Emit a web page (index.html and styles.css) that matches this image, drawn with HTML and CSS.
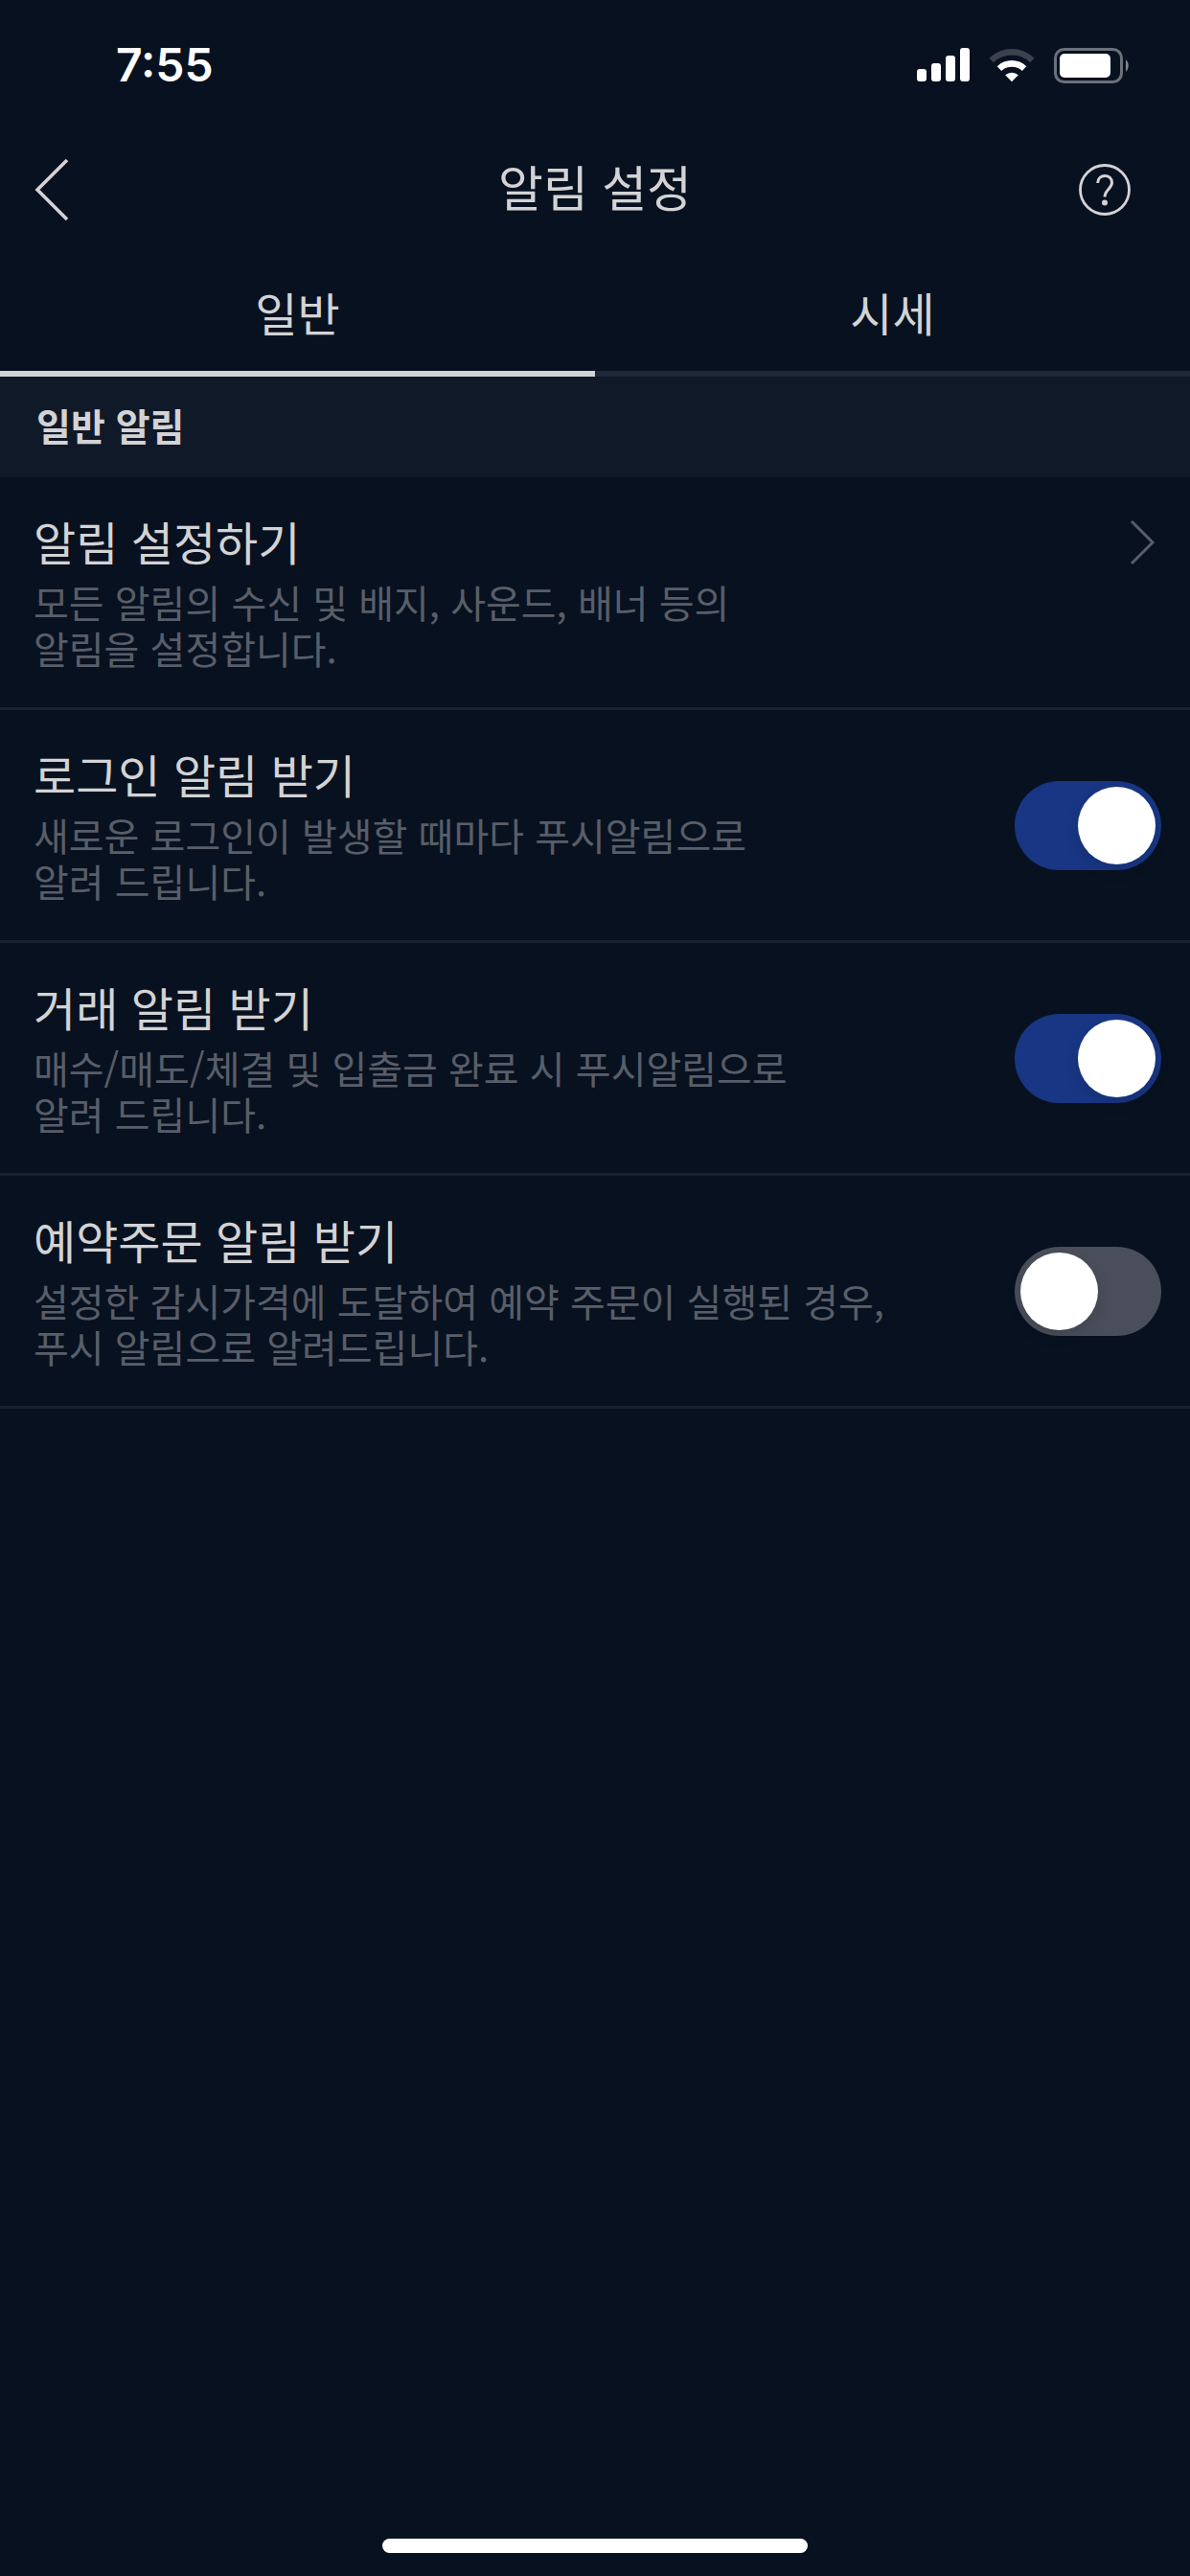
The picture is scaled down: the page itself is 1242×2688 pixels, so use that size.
FILE: index.html
```html
<!DOCTYPE html>
<html lang="ko">
<head>
    <meta charset="UTF-8">
    <meta name="viewport" content="width=device-width, initial-scale=1.0">
    <title>알림 설정</title>
    <link rel="stylesheet" href="styles.css">
</head>
<body>
    <div class="status-bar">
        <span class="time">7:55</span>
        <div class="status-icons">
            <svg width="55" height="36" viewBox="0 0 55 36" fill="#fff">
                <rect x="0" y="22" width="10" height="13" rx="3"/>
                <rect x="15" y="16" width="10" height="19" rx="3"/>
                <rect x="30" y="8" width="10" height="27" rx="3"/>
                <rect x="45" y="0" width="10" height="35" rx="3"/>
            </svg>
            <svg width="48" height="36" viewBox="0 0 48 36" fill="#fff">
                <path d="M0.5 10.5 A34 34 0 0 1 47.5 10.5 L43.3 15.2 A28 28 0 0 0 4.7 15.2 Z" fill="#3c424d"/>
                <path d="M8.7 19.2 A22 22 0 0 1 39.3 19.2 L34.8 24 A16 16 0 0 0 13.2 24 Z"/>
                <path d="M17.2 28.2 A10.5 10.5 0 0 1 30.8 28.2 L24 35.3 Z"/>
            </svg>
            <svg width="79" height="37" viewBox="0 0 79 37">
                <rect x="1.5" y="1.5" width="69" height="34" rx="9" fill="none" stroke="#6b717a" stroke-width="3"/>
                <rect x="6" y="6" width="53" height="25" rx="5" fill="#fff"/>
                <path d="M75 12 A9 9 0 0 1 75 25 Z" fill="#848990"/>
            </svg>
        </div>
    </div>

    <header class="header">
        <button class="icon-button" type="button" aria-label="뒤로">
            <svg width="36" height="66" viewBox="0 0 36 66">
                <path d="M34 2 L3 33 L34 64" fill="none" stroke="#d3d3d5" stroke-width="3.6"/>
            </svg>
        </button>
        <h1>알림 설정</h1>
        <button class="icon-button help" type="button" aria-label="도움말">
            <svg width="54" height="54" viewBox="0 0 54 54" fill="none" stroke="#d3d3d5" stroke-width="2.8">
                <circle cx="27" cy="27" r="25.5"/>
                <path d="M19.7 20 C19.7 10 34.5 10 34.5 19.5 C34.5 26 27 27 27 34.5" stroke-width="3"/>
                <circle cx="27" cy="40.5" r="3" fill="#d3d3d5" stroke="none"/>
            </svg>
        </button>
    </header>

    <nav class="tabs" role="tablist">
        <button class="tab active" type="button" role="tab" aria-selected="true">일반</button>
        <button class="tab" type="button" role="tab" aria-selected="false">시세</button>
    </nav>

    <main>
        <h2 class="section-title">일반 알림</h2>

        <a class="row" href="#">
            <div class="row-text">
                <span class="row-title">알림 설정하기</span>
                <p>모든 알림의 수신 및 배지, 사운드, 배너 등의<br>알림을 설정합니다.</p>
            </div>
            <svg class="chevron" width="27" height="48" viewBox="0 0 27 48">
                <path d="M2 2 L24 24 L2 46" fill="none" stroke="#585e69" stroke-width="3"/>
            </svg>
        </a>

        <div class="row">
            <div class="row-text">
                <label class="row-title" for="login">로그인 알림 받기</label>
                <p>새로운 로그인이 발생할 때마다 푸시알림으로<br>알려 드립니다.</p>
            </div>
            <input class="switch" type="checkbox" id="login" checked>
        </div>

        <div class="row">
            <div class="row-text">
                <label class="row-title" for="trade">거래 알림 받기</label>
                <p>매수/매도/체결 및 입출금 완료 시 푸시알림으로<br>알려 드립니다.</p>
            </div>
            <input class="switch" type="checkbox" id="trade" checked>
        </div>

        <div class="row">
            <div class="row-text">
                <label class="row-title" for="reserve">예약주문 알림 받기</label>
                <p>설정한 감시가격에 도달하여 예약 주문이 실행된 경우,<br>푸시 알림으로 알려드립니다.</p>
            </div>
            <input class="switch" type="checkbox" id="reserve">
        </div>
    </main>

    <div class="home-indicator"></div>
</body>
</html>
```
FILE: styles.css
```css
* {
    box-sizing: border-box;
}

body {
    margin: 0;
    min-height: 100vh;
    display: flex;
    flex-direction: column;
    background: #08111f;
    color: #d3d3d5;
    font-family: "Noto Sans CJK KR", sans-serif;
    font-weight: 400;
}

button {
    margin: 0;
    padding: 0;
    border: none;
    background: none;
    color: inherit;
    font: inherit;
}

svg {
    display: block;
}

.status-bar {
    display: flex;
    justify-content: space-between;
    align-items: center;
    padding: 38px 63px 38px 121px;
}

.time {
    font-family: Inter, sans-serif;
    font-size: 48px;
    font-weight: 600;
    line-height: 60px;
    color: #fff;
}

.status-icons {
    display: flex;
    align-items: center;
    gap: 20px;
}

.header {
    display: grid;
    grid-template-columns: 1fr auto 1fr;
    align-items: center;
    padding: 26px 62px 26px 36px;
}

.header h1 {
    margin: 0 0 0 26px;
    padding-bottom: 8px;
    font-size: 51px;
    font-weight: 400;
    line-height: 64px;
}

.help {
    justify-self: end;
}

.tabs {
    display: flex;
}

.tab {
    flex: 1;
    padding: 35px 0 32px;
    border-bottom: 6px solid #1f2836;
    font-size: 48px;
    line-height: 60px;
}

.tab.active {
    border-bottom-color: #d3d3d5;
}

.section-title {
    margin: 0;
    padding: 20px 38px 25px;
    background: #101928;
    font-size: 39px;
    font-weight: 700;
    line-height: 60px;
}

.row {
    display: flex;
    justify-content: space-between;
    align-items: center;
    padding: 36px 30px 36px 35px;
    border-bottom: 3px solid #18212f;
    color: inherit;
    text-decoration: none;
}

.row-text {
    padding-bottom: 2px;
}

.row-title {
    display: block;
    margin-bottom: 10px;
    font-size: 48px;
    line-height: 60px;
}

.row p {
    margin: 0;
    font-size: 40px;
    line-height: 48px;
    color: #585e69;
}

.chevron {
    align-self: flex-start;
    margin: 8px 6px 0 0;
}

.switch {
    appearance: none;
    flex: none;
    width: 153px;
    height: 93px;
    margin: 0;
    padding: 6px;
    border-radius: 47px;
    background: #494e5a;
}

.switch::before {
    content: "";
    display: block;
    width: 81px;
    height: 81px;
    border-radius: 50%;
    background: #fff;
    box-shadow: 0 6px 16px rgba(0, 0, 0, 0.12);
}

.switch:checked {
    background: #183684;
}

.switch:checked::before {
    margin-left: auto;
}

.home-indicator {
    width: 444px;
    height: 15px;
    margin: auto auto 24px;
    border-radius: 8px;
    background: #fff;
}
```
